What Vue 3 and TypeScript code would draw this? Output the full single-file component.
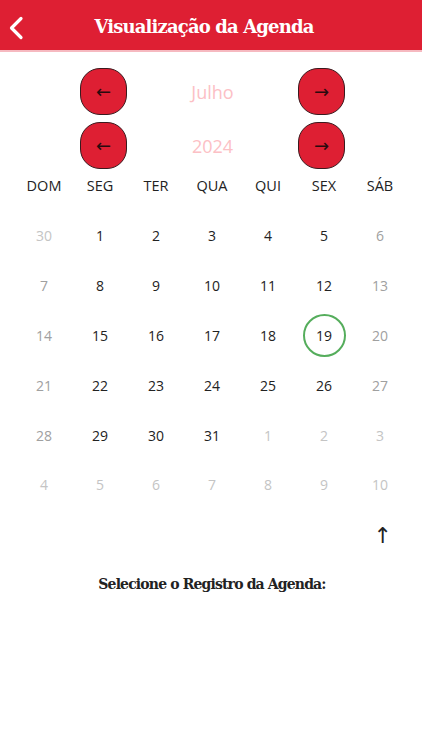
<script setup lang="ts">
interface Day { n: number; muted: boolean; today: boolean }
const weekdays: string[] = ['DOM', 'SEG', 'TER', 'QUA', 'QUI', 'SEX', 'SÁB']
const days: Day[] = []
const seq: number[] = [30, ...Array.from({ length: 31 }, (_, i) => i + 1), ...Array.from({ length: 10 }, (_, i) => i + 1)]
seq.forEach((n, i) => {
  const col = i % 7
  const inMonth = i >= 1 && i <= 31
  days.push({ n, muted: !inMonth || col === 0 || col === 6, today: inMonth && n === 19 })
})
const faded = (i: number): boolean => i === 0 || i > 31
const pickers: string[] = ['Julho', '2024']
</script>

<template>
  <div class="page">
    <header class="bar">
      <svg class="back" width="16" height="24" viewBox="0 0 16 24" fill="none">
        <path d="M13 2.5 3.500 12l9.500 9.500" stroke="#fff" stroke-width="3.200" stroke-linecap="round" stroke-linejoin="round" />
      </svg>
      <h1 class="title">Visualização da Agenda</h1>
    </header>

    <section class="pickers">
      <div v-for="p in pickers" :key="p" class="picker">
        <button class="nav" type="button">
          <span class="arrow">←</span>
        </button>
        <span class="value">{{ p }}</span>
        <button class="nav" type="button">
          <span class="arrow">→</span>
        </button>
      </div>
    </section>

    <section class="calendar">
      <div class="week">
        <span v-for="w in weekdays" :key="w" class="wd">{{ w }}</span>
      </div>
      <div class="grid">
        <div v-for="(d, i) in days" :key="i" class="cell">
          <span class="day" :class="{ muted: d.muted, faded: faded(i), today: d.today }">{{ d.n }}</span>
        </div>
      </div>
    </section>

    <div class="up-row"><span class="up">↑</span></div>
    <p class="select">Selecione o Registro da Agenda:</p>
  </div>
</template>

<style scoped>
.page {
  width: 422px;
  height: 750px;
  background: #fff;
  font-family: "Open Sans", sans-serif;
  overflow: hidden;
}
.bar {
  height: 50px;
  background: #de1f33;
  border-bottom: 2px solid #f6b9c0;
  box-sizing: content-box;
  position: relative;
  display: flex;
  align-items: center;
  justify-content: center;
}
.back {
  position: absolute;
  left: 8px;
  top: 16px;
}
.title {
  margin: 2px 14px 0 0;
  color: #fff;
  font-family: "DejaVu Serif", serif;
  font-size: 18px;
  font-weight: 700;
  letter-spacing: -0.85px;
}
.pickers {
  padding-top: 16px;
  display: flex;
  flex-direction: column;
  gap: 7px;
}
.picker {
  display: flex;
  align-items: center;
  padding-left: 80px;
  width: 265px;
  justify-content: space-between;
}
.nav {
  width: 47px;
  height: 47px;
  padding: 0;
  background: #de1f33;
  border: 1.500px solid #3a1a1e;
  border-radius: 20px;
  display: flex;
  align-items: center;
  justify-content: center;
}
.arrow {
  color: #2a0a0e;
  font-family: "DejaVu Sans", sans-serif;
  font-size: 18px;
  line-height: 1;
}
.value {
  color: #fcc0c5;
  font-size: 18px;
}
.calendar {
  padding: 0 14px 0 16px;
}
.week,
.grid {
  display: grid;
  grid-template-columns: repeat(7, 56px);
}
.week {
  margin-top: 5px;
  height: 22px;
  align-items: center;
}
.wd {
  text-align: center;
  color: #222;
  font-size: 14.500px;
}
.grid {
  grid-auto-rows: 49.800px;
  margin-top: 15px;
}
.cell {
  display: flex;
  align-items: center;
  justify-content: center;
}
.day {
  width: 43px;
  height: 43px;
  box-sizing: border-box;
  border-radius: 50%;
  display: flex;
  align-items: center;
  justify-content: center;
  color: #222;
  font-size: 14px;
}
.day.muted {
  color: #a0a0a0;
}
.day.faded {
  color: #c4c4c4;
}
.today {
  border: 2px solid #55ad5c;
}
.up-row {
  display: flex;
  justify-content: flex-end;
  padding-right: 30px;
  margin-top: 11px;
  height: 30px;
  align-items: center;
}
.up {
  color: #222;
  font-family: "DejaVu Sans", sans-serif;
  font-size: 22px;
  line-height: 1;
}
.select {
  margin: 25px 0 0 2px;
  text-align: center;
  color: #222;
  font-family: "DejaVu Serif", serif;
  font-size: 14px;
  font-weight: 700;
  letter-spacing: -0.85px;
}
</style>
